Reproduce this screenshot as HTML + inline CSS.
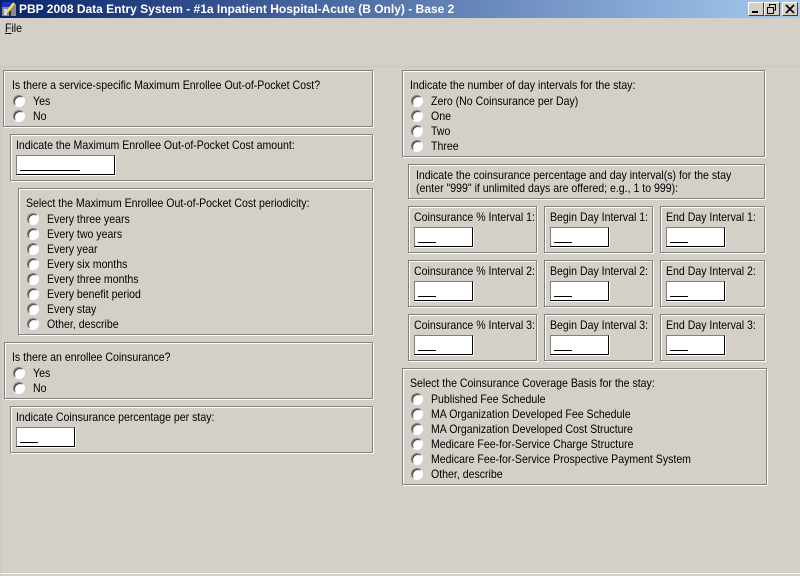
<!DOCTYPE html>
<html><head><meta charset="utf-8"><style>
html,body{margin:0;padding:0;width:800px;height:576px;overflow:hidden;background:#d4d0c8}
*{box-sizing:border-box}
body{font-family:"Liberation Sans",sans-serif;font-size:12px;color:#000;position:relative}
.a{position:absolute}
.t{position:absolute;white-space:nowrap;line-height:14px;height:14px;transform:scaleX(.88);transform-origin:0 0}
.p{position:absolute;border:1px solid #808080;box-shadow:inset 1px 1px 0 #fff,1px 1px 0 #fff}
.r{position:absolute;width:12px;height:12px;margin-top:1px;border-radius:50%;background:#fff;border:1px solid;border-color:#808080 #fff #fff #808080;box-shadow:inset 1px 1px 0 #404040}
.i{position:absolute;background:#fff;border:1px solid;border-color:#808080 #000 #000 #808080;box-shadow:1px 1px 0 #fff}
.i b{position:absolute;left:3px;bottom:3px;height:1px;background:#000}
</style></head><body>
<div class="a" style="left:0;top:0;width:800px;height:18px;background:linear-gradient(90deg,#0a246a,#a6caf0)"></div>
<svg class="a" style="left:1px;top:1px" width="16" height="16"><rect x="1" y="3" width="14" height="12" fill="#8a8a90"/><rect x="1" y="1" width="9" height="5" fill="#2030c0"/><path d="M6 11L13 2" stroke="#f4e840" stroke-width="2.4"/><rect x="3" y="8" width="3" height="6" fill="#d8d8d8"/><rect x="8" y="10" width="2" height="5" fill="#303030"/></svg>
<div class="t" style="left:19px;top:2px;color:#fff;font-weight:bold;transform:none">PBP 2008 Data Entry System - #1a Inpatient Hospital-Acute (B Only) - Base 2</div>
<div class="a" style="left:748px;top:2px;width:16px;height:14px;background:#d4d0c8;border:1px solid;border-color:#fff #404040 #404040 #fff"></div>
<div class="a" style="left:752px;top:11px;width:6px;height:2px;background:#000"></div>
<div class="a" style="left:764px;top:2px;width:16px;height:14px;background:#d4d0c8;border:1px solid;border-color:#fff #404040 #404040 #fff"></div>
<svg class="a" style="left:766px;top:3px" width="12" height="12"><path d="M3.5 3.5V1.5H9.5V7H7.5M1.5 4.5H7.5V10.5H1.5Z M3 1.5H10 M1 4.5H8" fill="none" stroke="#000"/></svg>
<div class="a" style="left:782px;top:2px;width:16px;height:14px;background:#d4d0c8;border:1px solid;border-color:#fff #404040 #404040 #fff"></div>
<svg class="a" style="left:784px;top:3px" width="12" height="12"><path d="M2 2L10 10M10 2L2 10" stroke="#000" stroke-width="1.6"/></svg>
<div class="t" style="left:5px;top:21px"><u>F</u>ile</div>
<div class="a" style="left:0;top:65px;width:800px;height:3px;background:#cbcbc7"></div>
<div class="a" style="left:0;top:65px;width:2px;height:508px;background:#cbcbc7"></div>
<div class="a" style="left:0;top:573px;width:800px;height:1px;background:#f4f3f0"></div>

<div class="p" style="left:3px;top:70px;width:370px;height:57px"></div>
<div class="t" style="left:12px;top:78px">Is there a service-specific Maximum Enrollee Out-of-Pocket Cost?</div>
<div class="r" style="left:13px;top:94px"></div><div class="t" style="left:33px;top:94px">Yes</div>
<div class="r" style="left:13px;top:109px"></div><div class="t" style="left:33px;top:109px">No</div>

<div class="p" style="left:10px;top:134px;width:363px;height:47px"></div>
<div class="t" style="left:16px;top:138px">Indicate the Maximum Enrollee Out-of-Pocket Cost amount:</div>
<div class="i" style="left:16px;top:155px;width:99px;height:20px"><b style="width:60px"></b></div>

<div class="p" style="left:18px;top:188px;width:355px;height:147px"></div>
<div class="t" style="left:26px;top:196px">Select the Maximum Enrollee Out-of-Pocket Cost periodicity:</div>
<div class="r" style="left:27px;top:212px"></div><div class="t" style="left:47px;top:212px">Every three years</div>
<div class="r" style="left:27px;top:227px"></div><div class="t" style="left:47px;top:227px">Every two years</div>
<div class="r" style="left:27px;top:242px"></div><div class="t" style="left:47px;top:242px">Every year</div>
<div class="r" style="left:27px;top:257px"></div><div class="t" style="left:47px;top:257px">Every six months</div>
<div class="r" style="left:27px;top:272px"></div><div class="t" style="left:47px;top:272px">Every three months</div>
<div class="r" style="left:27px;top:287px"></div><div class="t" style="left:47px;top:287px">Every benefit period</div>
<div class="r" style="left:27px;top:302px"></div><div class="t" style="left:47px;top:302px">Every stay</div>
<div class="r" style="left:27px;top:317px"></div><div class="t" style="left:47px;top:317px">Other, describe</div>

<div class="p" style="left:4px;top:342px;width:369px;height:57px"></div>
<div class="t" style="left:12px;top:350px">Is there an enrollee Coinsurance?</div>
<div class="r" style="left:13px;top:366px"></div><div class="t" style="left:33px;top:366px">Yes</div>
<div class="r" style="left:13px;top:381px"></div><div class="t" style="left:33px;top:381px">No</div>

<div class="p" style="left:10px;top:406px;width:363px;height:47px"></div>
<div class="t" style="left:16px;top:410px">Indicate Coinsurance percentage per stay:</div>
<div class="i" style="left:16px;top:427px;width:59px;height:20px"><b style="width:18px"></b></div>

<div class="p" style="left:402px;top:70px;width:363px;height:87px"></div>
<div class="t" style="left:410px;top:78px">Indicate the number of day intervals for the stay:</div>
<div class="r" style="left:411px;top:94px"></div><div class="t" style="left:431px;top:94px">Zero (No Coinsurance per Day)</div>
<div class="r" style="left:411px;top:109px"></div><div class="t" style="left:431px;top:109px">One</div>
<div class="r" style="left:411px;top:124px"></div><div class="t" style="left:431px;top:124px">Two</div>
<div class="r" style="left:411px;top:139px"></div><div class="t" style="left:431px;top:139px">Three</div>

<div class="p" style="left:408px;top:164px;width:357px;height:35px"></div>
<div class="t" style="left:416px;top:168px">Indicate the coinsurance percentage and day interval(s) for the stay</div>
<div class="t" style="left:416px;top:181px">(enter "999" if unlimited days are offered; e.g., 1 to 999):</div>

<div class="p" style="left:408px;top:206px;width:129px;height:47px"></div>
<div class="t" style="left:414px;top:210px">Coinsurance % Interval 1:</div>
<div class="i" style="left:414px;top:227px;width:59px;height:20px"><b style="width:18px"></b></div>
<div class="p" style="left:544px;top:206px;width:109px;height:47px"></div>
<div class="t" style="left:550px;top:210px">Begin Day Interval 1:</div>
<div class="i" style="left:550px;top:227px;width:59px;height:20px"><b style="width:18px"></b></div>
<div class="p" style="left:660px;top:206px;width:105px;height:47px"></div>
<div class="t" style="left:666px;top:210px">End Day Interval 1:</div>
<div class="i" style="left:666px;top:227px;width:59px;height:20px"><b style="width:18px"></b></div>

<div class="p" style="left:408px;top:260px;width:129px;height:47px"></div>
<div class="t" style="left:414px;top:264px">Coinsurance % Interval 2:</div>
<div class="i" style="left:414px;top:281px;width:59px;height:20px"><b style="width:18px"></b></div>
<div class="p" style="left:544px;top:260px;width:109px;height:47px"></div>
<div class="t" style="left:550px;top:264px">Begin Day Interval 2:</div>
<div class="i" style="left:550px;top:281px;width:59px;height:20px"><b style="width:18px"></b></div>
<div class="p" style="left:660px;top:260px;width:105px;height:47px"></div>
<div class="t" style="left:666px;top:264px">End Day Interval 2:</div>
<div class="i" style="left:666px;top:281px;width:59px;height:20px"><b style="width:18px"></b></div>

<div class="p" style="left:408px;top:314px;width:129px;height:47px"></div>
<div class="t" style="left:414px;top:318px">Coinsurance % Interval 3:</div>
<div class="i" style="left:414px;top:335px;width:59px;height:20px"><b style="width:18px"></b></div>
<div class="p" style="left:544px;top:314px;width:109px;height:47px"></div>
<div class="t" style="left:550px;top:318px">Begin Day Interval 3:</div>
<div class="i" style="left:550px;top:335px;width:59px;height:20px"><b style="width:18px"></b></div>
<div class="p" style="left:660px;top:314px;width:105px;height:47px"></div>
<div class="t" style="left:666px;top:318px">End Day Interval 3:</div>
<div class="i" style="left:666px;top:335px;width:59px;height:20px"><b style="width:18px"></b></div>

<div class="p" style="left:402px;top:368px;width:365px;height:117px"></div>
<div class="t" style="left:410px;top:376px">Select the Coinsurance Coverage Basis for the stay:</div>
<div class="r" style="left:411px;top:392px"></div><div class="t" style="left:431px;top:392px">Published Fee Schedule</div>
<div class="r" style="left:411px;top:407px"></div><div class="t" style="left:431px;top:407px">MA Organization Developed Fee Schedule</div>
<div class="r" style="left:411px;top:422px"></div><div class="t" style="left:431px;top:422px">MA Organization Developed Cost Structure</div>
<div class="r" style="left:411px;top:437px"></div><div class="t" style="left:431px;top:437px">Medicare Fee-for-Service Charge Structure</div>
<div class="r" style="left:411px;top:452px"></div><div class="t" style="left:431px;top:452px">Medicare Fee-for-Service Prospective Payment System</div>
<div class="r" style="left:411px;top:467px"></div><div class="t" style="left:431px;top:467px">Other, describe</div>
</body></html>
